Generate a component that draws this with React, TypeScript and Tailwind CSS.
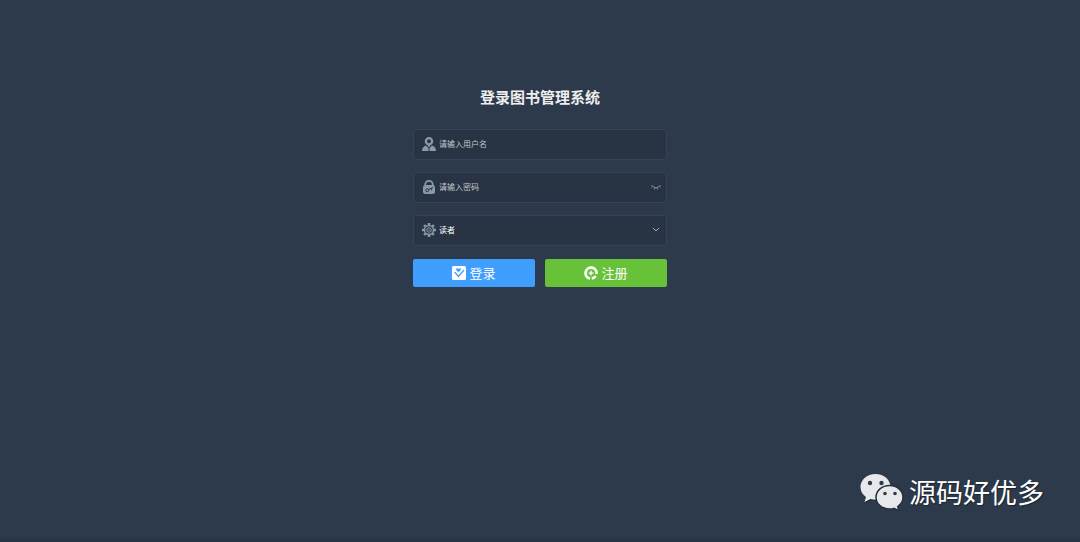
import type { ReactNode } from "react";

function UserIcon() {
  return (
    <svg viewBox="0 0 28 28" className="size-3.5" fill="#889aa4" aria-hidden="true">
      <path fillRule="evenodd" d="M14 0a8.500 8.500 0 1 1 0 17 8.500 8.500 0 0 1 0-17Zm0 4.500a4 4 0 1 0 0 8 4 4 0 0 0 0-8Z" />
      <path d="M0 28c0-6 3-9.500 8-11l5 5v6Zm28 0c0-6-3-9.500-8-11l-5 5v6Z" />
      <path d="m12 18 2 3 2-3v-2h-4Z" />
    </svg>
  );
}

function LockIcon() {
  return (
    <svg viewBox="0 0 28 28" className="size-3.5" fill="none" aria-hidden="true">
      <path d="M6.500 13V9a7.500 7.500 0 0 1 15 0v4" stroke="#889aa4" strokeWidth="3.500" />
      <rect x="2" y="10" width="24" height="18" rx="5" fill="#889aa4" />
      <circle cx="10.500" cy="20.500" r="3" stroke="#283443" strokeWidth="2" />
      <path d="m13 19 9-4m-4 1.500 1.500 4" stroke="#283443" strokeWidth="2" />
    </svg>
  );
}

const teeth = [0, 45, 90, 135, 180, 225, 270, 315];

function GearIcon() {
  return (
    <svg viewBox="0 0 28 28" className="size-3.5" fill="none" stroke="#889aa4" aria-hidden="true">
      {teeth.map((deg) => (
        <path key={deg} d="M14 4V0" strokeWidth="5" transform={`rotate(${deg} 14 14)`} />
      ))}
      <circle cx="14" cy="14" r="9" strokeWidth="3" />
      <circle cx="14" cy="14" r="4.500" strokeWidth="2" />
      <circle cx="14" cy="14" r="1" fill="#889aa4" />
    </svg>
  );
}

function ClosedEyeIcon() {
  return (
    <svg viewBox="0 0 20 12" className="h-1.5 w-2.5" fill="none" stroke="#889aa4" strokeWidth="1.800" aria-hidden="true">
      <path d="M1 2c5 7 13 7 18 0M3.500 4.500 1 7M8 7l-1 4M12 7l1 4M16.500 4.500 19 7" />
    </svg>
  );
}

function CheckBoxIcon() {
  return (
    <svg viewBox="0 0 28 28" className="size-3.5" aria-hidden="true">
      <rect width="28" height="28" rx="3" fill="#fff" />
      <path d="m5 12 8 9L24 8" fill="none" stroke="#409eff" strokeWidth="2.500" />
      <path d="M9 5c1.500-1 3-.5 4 1 1-1.500 2.500-2 4-1s1 4-4 7c-5-3-5.500-6-4-7Z" fill="#409eff" />
    </svg>
  );
}

function RegisterIcon() {
  return (
    <svg viewBox="0 0 28 28" className="size-3.5" fill="none" stroke="#fff" aria-hidden="true">
      <path d="M12 25A11 11 0 1 1 25 16" strokeWidth="5.500" />
      <path d="M14 9v10M9 14h10" strokeWidth="2.500" />
      <path d="M15.500 25c3.500-.5 6-2 8-5" strokeWidth="5" />
    </svg>
  );
}

function WechatIcon() {
  return (
    <svg viewBox="0 0 44 38" className="h-[38px] w-11" aria-hidden="true">
      <g transform="translate(1 1)" fill="#1b2530">
        <path d="M15.500 1C7 1 .5 6.700.5 14c0 4.200 2 7.700 5.500 10l-1.500 5 6-3c1.600.5 3.200.7 5 .7 8.500 0 15-5.500 15-12.700S24 1 15.500 1Z" />
      </g>
      <path d="M15.500 1C7 1 .5 6.700.5 14c0 4.200 2 7.700 5.500 10l-1.500 5 6-3c1.600.5 3.200.7 5 .7 8.500 0 15-5.500 15-12.700S24 1 15.500 1Z" fill="#e6e8ea" />
      <path d="M29.500 12.500C22 12.500 16 17.600 16 24.300S22 36 29.500 36c1.600 0 3-.2 4.400-.6l5 2.300-1.200-4.200c3.300-2.200 5.300-5.400 5.300-9.200 0-6.700-6-11.800-13.500-11.800Z" fill="#e6e8ea" stroke="#25303d" strokeWidth="1.500" />
      <g fill="#2d3a4b">
        <circle cx="10" cy="10" r="2.200" />
        <circle cx="21.500" cy="10" r="2.200" />
        <circle cx="25" cy="20.500" r="1.800" />
        <circle cx="35" cy="20.500" r="1.800" />
      </g>
    </svg>
  );
}

function Field({ id, label, icon, children }: { id: string; label: string; icon: ReactNode; children: ReactNode }) {
  return (
    <div className="flex h-[31px] items-center gap-[3px] rounded-[3px] border border-[#364354] bg-[#283443] pr-[5px] pb-0.5 pl-2">
      <label htmlFor={id} aria-label={label} className="shrink-0">
        {icon}
      </label>
      {children}
    </div>
  );
}

const control = "h-full min-w-0 flex-1 bg-transparent p-0 text-[8px] outline-none placeholder:text-[#c3c7cd]";
const action = "flex h-7 flex-1 items-center justify-center gap-[3px] rounded-xs text-[13px] text-white";

export default function App() {
  return (
    <div className="flex min-h-screen flex-col border-b-4 border-[#2b3548] bg-[#2d3a4b] font-['Noto_Sans_CJK_SC',sans-serif]">
      <form className="mx-auto w-full max-w-[254px] pt-[85px]" onSubmit={(e) => e.preventDefault()}>
        <h1 className="text-center text-[15px] leading-6 font-bold text-[#eeeeee]">登录图书管理系统</h1>

        <div className="mt-5 flex flex-col gap-3">
          <Field id="username" label="用户名" icon={<UserIcon />}>
            <input id="username" type="text" placeholder="请输入用户名" className={`${control} text-white`} />
          </Field>
          <Field id="password" label="密码" icon={<LockIcon />}>
            <input id="password" type="password" placeholder="请输入密码" className={`${control} text-white`} />
            <button type="button" aria-label="显示密码">
              <ClosedEyeIcon />
            </button>
          </Field>
          <Field id="role" label="角色" icon={<GearIcon />}>
            <select id="role" className={`${control} appearance-none text-white`}>
              <option>读者</option>
            </select>
            <svg viewBox="0 0 16 10" className="mr-px h-[5px] w-2" fill="none" stroke="#a5afb9" strokeWidth="2" aria-hidden="true">
              <path d="m2 2 6 6 6-6" />
            </svg>
          </Field>
        </div>

        <div className="mt-[13px] flex gap-2.5">
          <button type="submit" className={`${action} bg-[#409eff]`}>
            <CheckBoxIcon />
            登录
          </button>
          <button type="button" className={`${action} bg-[#67c23a]`}>
            <RegisterIcon />
            注册
          </button>
        </div>
      </form>

      <footer className="mt-auto mb-[26px] flex items-center gap-[5px] self-end pr-9">
        <WechatIcon />
        <span className="text-[27px] leading-10 text-white [text-shadow:1px_1px_1px_#1b2530]">源码好优多</span>
      </footer>
    </div>
  );
}
